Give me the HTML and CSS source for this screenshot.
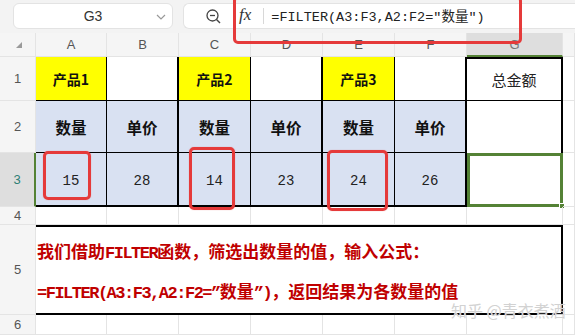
FILE: index.html
```html
<!DOCTYPE html>
<html>
<head>
<meta charset="utf-8">
<link rel="stylesheet" href="styles.css">
</head>
<body>
<div class="topbar">
  <div class="namebox">
    <span class="name">G3</span>
    <svg class="chev" width="10" height="6" viewBox="0 0 10 6"><path d="M1 1 L5 5 L9 1" fill="none" stroke="#999" stroke-width="1.2"/></svg>
  </div>
  <div class="fbox">
    <svg class="zoomic" width="18" height="18" viewBox="0 0 18 18"><circle cx="7.5" cy="7.5" r="5.5" fill="none" stroke="#444" stroke-width="1.3"/><path d="M5 7.5 H10" stroke="#444" stroke-width="1.3"/><path d="M11.5 11.5 L15 15" stroke="#444" stroke-width="1.4"/></svg>
    <span class="fx">fx</span>
    <span class="divider"></span>
    <span class="ftext">=FILTER(A3:F3,A2:F2="数量")</span>
  </div>
  <div class="fhl"></div>
</div>
<div class="sheet">
  <div class="corner"><span class="tri"></span></div>
  <div class="ch">A</div><div class="ch">B</div><div class="ch">C</div><div class="ch">D</div><div class="ch">E</div><div class="ch">F</div><div class="ch ch-sel">G</div><div class="ch"></div>

  <div class="rh">1</div>
  <div class="c yel b1 bold">产品1</div>
  <div class="c b1 bk2"></div>
  <div class="c yel b1 bold">产品2</div>
  <div class="c b1 bk2"></div>
  <div class="c yel b1 bold">产品3</div>
  <div class="c b1 bk2"></div>
  <div class="c g1 total">总金额</div>
  <div class="c"></div>

  <div class="rh">2</div>
  <div class="c blu b1 bold big">数量</div>
  <div class="c blu b1 bk2 bold big">单价</div>
  <div class="c blu b1 bold big">数量</div>
  <div class="c blu b1 bk2 bold big">单价</div>
  <div class="c blu b1 bold big">数量</div>
  <div class="c blu b1 bk2 bold big">单价</div>
  <div class="c g2"></div>
  <div class="c"></div>

  <div class="rh rh-sel">3</div>
  <div class="c blu b1 b3 num">15</div>
  <div class="c blu b1 b3 bk2 num">28</div>
  <div class="c blu b1 b3 num">14</div>
  <div class="c blu b1 b3 bk2 num">23</div>
  <div class="c blu b1 b3 num">24</div>
  <div class="c blu b1 b3 bk2 num">26</div>
  <div class="c g3"><span class="handle"></span></div>
  <div class="c"></div>

  <div class="rh">4</div>
  <div class="c"></div><div class="c"></div><div class="c"></div><div class="c"></div><div class="c"></div><div class="c"></div><div class="c"></div><div class="c"></div>

  <div class="rh">5</div>
  <div class="c merged">
    <p class="note">我们借助<span class="lat">FILTER</span>函数，筛选出数量的值，输入公式：</p>
    <p class="note"><span class="lat">=FILTER(A3:F3,A2:F2=”</span>数量<span class="lat">”)</span>，返回结果为各数量的值</p>
  </div>
  <div class="c"></div>

  <div class="rh">6</div>
  <div class="c"></div><div class="c"></div><div class="c"></div><div class="c"></div><div class="c"></div><div class="c"></div><div class="c"></div><div class="c"></div>

  <div class="mark m1"></div>
  <div class="mark m2"></div>
  <div class="mark m3"></div>
  <div class="wm">知乎 @青衣煮酒</div>
</div>
</body>
</html>
```
FILE: styles.css
```css
* { box-sizing: border-box; }
html, body { margin: 0; padding: 0; }
body {
  width: 575px;
  height: 335px;
  overflow: hidden;
  background: #fff;
  font-family: "Noto Sans CJK SC", "Liberation Sans", sans-serif;
  color: #222;
}
.topbar {
  position: relative;
  height: 33px;
  background: #f3f3f3;
  display: flex;
  align-items: flex-start;
  padding: 3px 0 0 13px;
  gap: 10px;
}
.namebox {
  width: 160px;
  height: 26px;
  background: #fff;
  border: 1px solid #e3e3e3;
  border-radius: 6px;
  display: flex;
  align-items: center;
  justify-content: center;
  position: relative;
}
.name { font-family: "Liberation Sans", sans-serif; font-size: 14px; color: #333; }
.chev { position: absolute; right: 6px; top: 10px; }
.fbox {
  flex: 1;
  height: 26px;
  background: #fff;
  border: 1px solid #e3e3e3;
  border-right: none;
  border-radius: 6px 0 0 6px;
  display: flex;
  align-items: center;
  padding-left: 21px;
}
.zoomic { margin-top: 2px; }
.fx {
  font-family: "Liberation Serif", serif;
  font-style: italic;
  font-size: 17px;
  color: #333;
  margin-left: 16px;
  margin-bottom: 3px;
}
.divider {
  width: 1px;
  height: 16px;
  background: #d8d8d8;
  margin-left: 12px;
}
.ftext {
  font-family: "Liberation Mono", "Noto Sans CJK SC", monospace;
  font-size: 13.5px;
  color: #222;
  margin-left: 7px;
  margin-bottom: 2px;
}
.fhl {
  position: absolute;
  left: 233px;
  top: -4px;
  width: 289px;
  height: 48px;
  border: 3px solid #e53a3a;
  border-radius: 5px;
  z-index: 5;
}
.sheet {
  position: relative;
  display: grid;
  grid-template-columns: 36px 71px 72px 72px 72px 72px 72px 96px 1fr;
  grid-template-rows: 24px 44px 52px 54px 18px 90px 20px;
}
.corner, .ch, .rh {
  background: #f5f5f5;
  color: #555;
  font-family: "Liberation Sans", sans-serif;
  font-size: 13px;
  display: flex;
  align-items: center;
  justify-content: center;
  border-right: 1px solid #e4e4e4;
  border-bottom: 1px solid #e4e4e4;
}
.tri {
  width: 0; height: 0;
  border-left: 6px solid transparent;
  border-bottom: 6px solid #9a9a9a;
  margin-left: 2px;
}
.ch-sel { background: #dedede; border-bottom: 2px solid #548235; color: #777; }
.rh-sel { background: #dedede; border-right: 2px solid #548235; color: #2f7f75; }
.c {
  border-right: 1px solid #e4e4e4;
  border-bottom: 1px solid #e4e4e4;
  display: flex;
  align-items: center;
  justify-content: center;
  font-size: 14px;
  position: relative;
}
.yel { background: #ffff00; }
.blu { background: #d9e1f2; }
.b1 { border-right: 1px solid #000; border-bottom: 1px solid #000; }
.b3 { border-bottom: 2px solid #000; }
.bk2 { border-right: 2px solid #000; }
.bold { font-weight: 700; font-size: 14px; color: #111; }
.big { font-size: 15.5px; }
.num { font-family: "Liberation Mono", monospace; font-size: 14px; color: #222; padding-top: 3px; }
.total { font-size: 15px; color: #222; }
.g1 { border-top: 2px solid #000; border-right: 2px solid #000; border-bottom: 1px solid #000; }
.g2 { border-right: 2px solid #000; border-bottom: none; }
.g3 { border: 3px solid #548235; }
.handle {
  position: absolute;
  right: -5px;
  bottom: -5px;
  width: 6px;
  height: 6px;
  background: #548235;
  border: 1px solid #fff;
}
.merged {
  grid-column: 2 / 9;
  border-top: 2px solid #000;
  border-right: 2px solid #000;
  border-bottom: 2px solid #000;
  flex-direction: column;
  align-items: flex-start;
  justify-content: center;
  gap: 15px;
  padding-left: 1px;
  padding-top: 5px;
}
.note {
  margin: 0;
  font-family: "Noto Sans CJK SC", sans-serif;
  font-weight: 700;
  font-size: 17px;
  line-height: 22px;
  color: #c00000;
  white-space: nowrap;
}
.lat {
  font-family: "Liberation Mono", monospace;
  letter-spacing: -1.5px;
}
.mark {
  position: absolute;
  border: 3px solid #e53a3a;
  border-radius: 5px;
  box-shadow: 0 0 1px rgba(229,58,58,0.5);
  z-index: 4;
}
.m1 { left: 43px; top: 118px; width: 48px; height: 49px; }
.m2 { left: 189px; top: 114px; width: 46px; height: 63px; }
.m3 { left: 327px; top: 117px; width: 61px; height: 61px; }
.wm {
  position: absolute;
  left: 451px;
  top: 267px;
  line-height: 20px;
  font-size: 16px;
  color: #d2d2d2;
  white-space: nowrap;
  text-shadow: 0 0 1px #fff;
  z-index: 6;
}
```
